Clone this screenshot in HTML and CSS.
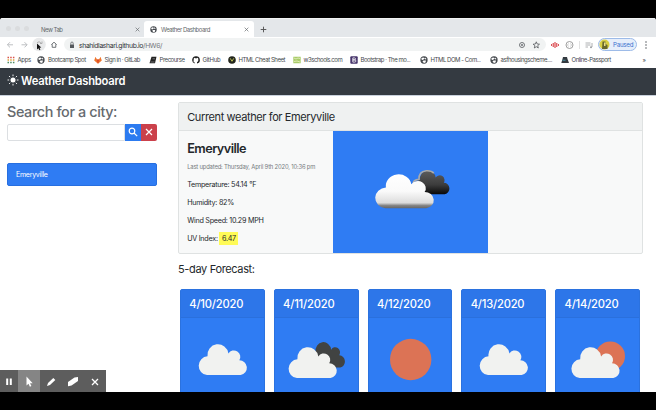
FILE: index.html
```html
<!DOCTYPE html>
<html lang="en">
<head>
<meta charset="utf-8">
<title>Weather Dashboard</title>
<link rel="stylesheet" href="styles.css">
</head>
<body>
<svg class="defs" width="0" height="0">
  <defs>
    <linearGradient id="light" x1="0" y1="0" x2="0" y2="1"><stop offset="0" stop-color="#fff"/><stop offset=".5" stop-color="#fafafa"/><stop offset=".84" stop-color="#dcdcdc"/><stop offset=".92" stop-color="#858585"/><stop offset="1" stop-color="#666"/></linearGradient>
    <linearGradient id="dark" x1="0" y1="0" x2="0" y2="1"><stop offset="0" stop-color="#5d5d5d"/><stop offset=".6" stop-color="#3c3c3c"/><stop offset="1" stop-color="#080808"/></linearGradient>
    <path id="cloud" d="M9.500 31A9.300 9.300 0 0 1 10 12.500A10.300 10.300 0 0 1 30.500 9.700A6.300 6.300 0 0 1 41.200 16.500A7.300 7.300 0 0 1 42.500 31Z"/>
    <symbol id="globe" viewBox="0 0 16 16"><circle cx="8" cy="8" r="7.300" fill="#45494e"/><path d="M3 4l4-1 2 2-2 2-2 1-2-1zM10 3l3 3-2 1-2-2zM7 9l5 0-1 4-3 1-3-3z" fill="#fff"/></symbol>
  </defs>
</svg>
<div class="window">
  <div class="tabs">
    <div class="lights"><i></i><i></i><i></i></div>
    <div class="tab idle"><span class="t-new">New Tab</span><svg class="x" viewBox="0 0 8 8"><path d="M1 1l6 6M7 1l-6 6"/></svg></div>
    <div class="tab active"><svg class="fav"><use href="#globe"/></svg><span class="t-wd">Weather Dashboard</span><svg class="x" viewBox="0 0 8 8"><path d="M1 1l6 6M7 1l-6 6"/></svg></div>
    <svg class="plus" viewBox="0 0 8 8"><path d="M4 .8v6.400M.8 4h6.400"/></svg>
  </div>
  <div class="toolbar">
    <svg class="nav" viewBox="0 0 64 15" fill="none">
      <path d="M13 7.800H7.500M10 5.200L7.400 7.800L10 10.400M21.500 7.800H27M24.500 5.200L27.100 7.800L24.500 10.400" stroke="#b5b8bb" stroke-width=".9"/>
      <circle cx="39" cy="7.500" r="6.800" fill="#e9eaeb"/><path d="M41 6a2.700 2.700 0 0 0-4-.3M42 4.500v2h-2" stroke="#999" stroke-width=".7"/>
      <path d="M37 6.500v6l1.400-1.300 1 2 1-.6-.9-1.900 1.800-.2z" fill="#111"/>
      <path d="M51.300 7.700L54 5.200L56.700 7.700M52.200 7.300V10.300H55.800V7.300" stroke="#5f6368" stroke-width=".9"/>
    </svg>
    <div class="address"><svg class="lock" viewBox="0 0 6 8"><path d="M1 3.500h4v3.500H1z" fill="#55595d"/><path d="M1.800 3.500V2.200a1.200 1.200 0 0 1 2.400 0v1.300" fill="none" stroke="#55595d" stroke-width=".7"/></svg><span class="url">shahidlashari.github.io<em>/HW6/</em></span>
      <svg class="acts" viewBox="0 0 24 12" fill="none" stroke="#55595d"><circle cx="4" cy="6" r="2.500" stroke-width=".8"/><circle cx="4" cy="6" r=".6" stroke-width=".9"/><path d="M18.300 2.800l.9 2.200 2.300.2-1.800 1.500.6 2.300-2-1.300-2 1.300.6-2.300-1.800-1.500 2.300-.2z" stroke-width=".8"/></svg>
    </div>
    <svg class="ext" viewBox="0 0 46 14" fill="none"><path d="M4.200 5v4M6 4v6M7.800 5v4M2.500 6.200v1.600M9.500 6.200v1.600" stroke="#d42b31" stroke-width="1"/><circle cx="20.500" cy="7" r="3.500" stroke="#888" stroke-width=".8"/><path d="M19.500 5.500l-1 1.500 1 1.500M21.500 5.500l1 1.500-1 1.500" stroke="#999" stroke-width=".5"/><path d="M30.500 3v8" stroke="#d5d5d5" stroke-width=".7"/><path d="M36.500 5h5M36.500 7h5M36.500 9h2.500M43 5v4" stroke="#9a9da0" stroke-width=".8"/><circle cx="42" cy="9.300" r="1" fill="#9a9da0"/></svg>
    <div class="paused"><svg viewBox="0 0 11 11"><circle cx="5.500" cy="5.500" r="5" fill="#d8cf45"/><path d="M3.500 2.500h3v2.500l2 1v4H3z" fill="#67672f"/><path d="M5 3.500h1.500V7H5z" fill="#e9df8a"/></svg><span>Paused</span></div>
    <svg class="dots" viewBox="0 0 4 10"><circle cx="2" cy="2" r=".8"/><circle cx="2" cy="5" r=".8"/><circle cx="2" cy="8" r=".8"/></svg>
  </div>
  <div class="bookmarks">
    <div class="bm b1"><svg viewBox="0 0 8 8"><path d="M.5 1.500h7" stroke="#d9534a" stroke-width="1.500" stroke-dasharray="1.500 1.200"/><path d="M.5 4h7" stroke="#e0a43b" stroke-width="1.500" stroke-dasharray="1.500 1.200"/><path d="M.5 6.600h7" stroke="#4d8c62" stroke-width="1.500" stroke-dasharray="1.500 1.200"/></svg><span>Apps</span></div>
    <div class="bm b2"><svg><use href="#globe"/></svg><span>Bootcamp Spot</span></div>
    <div class="bm b3"><svg viewBox="0 0 8 8"><path d="M1.500.7L3 3.500h2L6.500.7 7.800 4.500 4 7.700.2 4.500z" fill="#ee752e"/><path d="M3 3.500h2L4 7.700z" fill="#d93a25"/></svg><span>Sign in · GitLab</span></div>
    <div class="bm b4"><svg viewBox="0 0 8 8"><path d="M2.500.8h5L6 7.300H.5z" fill="#222"/><path d="M3.500 2.800h2.500M1.500 6h4" stroke="#aaa" stroke-width=".6"/></svg><span>Precourse</span></div>
    <div class="bm b5"><svg viewBox="0 0 8 8"><path d="M4 .3a3.700 3.700 0 0 0-1.300 7.200V6.200C1 6 1.700 5 1.700 3.500L2 1.800l1.200.5h1.600L6 1.800l.3 1.700C6.300 5 6.500 5.700 5 6v1.600A3.700 3.700 0 0 0 4 .3z" fill="#222"/></svg><span>GitHub</span></div>
    <div class="bm b6"><svg viewBox="0 0 8 8"><circle cx="4" cy="4" r="3.800" fill="#22251c"/><path d="M2.200 2.300l1.800 3 1.800-3" fill="none" stroke="#b7ba57"/></svg><span>HTML Cheat Sheet</span></div>
    <div class="bm b7"><svg viewBox="0 0 8 8"><path d="M.3.800h7.400v6.400H.3z" fill="#a8cb69"/><path d="M1 2l2 1 2-1 2 .5M1 5.500l3-.5 3 1" stroke="#e4edbb" stroke-width=".9" fill="none"/></svg><span>w3schools.com</span></div>
    <div class="bm b8"><svg viewBox="0 0 8 8"><rect x=".3" y=".3" width="7.400" height="7.400" rx="1" fill="#46346b"/><path d="M2.800 1.900h1.700a1 1 0 0 1 0 2H2.800zM2.800 3.900h2a1.100 1.100 0 0 1 0 2.200h-2z" fill="none" stroke="#fff" stroke-width=".8"/></svg><span>Bootstrap · The mo...</span></div>
    <div class="bm b9"><svg><use href="#globe"/></svg><span>HTML DOM - Com...</span></div>
    <div class="bm b10"><svg><use href="#globe"/></svg><span>asfhousingscheme....</span></div>
    <div class="bm b11"><svg viewBox="0 0 8 8"><path d="M2 1h4l.5 2L8 7H.3L1.500 3z" fill="#343a40"/><path d="M1.500 3.800h3v1h-3z" fill="#4a91a0"/></svg><span>Online-Passport</span></div>
    <div class="more">»</div>
  </div>
  <header class="navbar"><svg viewBox="0 0 12 12"><circle cx="6" cy="6" r="2.500" fill="#fff"/><path d="M6 .5v1.700M6 9.800v1.700M.5 6h1.700M9.800 6h1.700M2 2l1.200 1.200M8.800 8.800L10 10M10 2L8.800 3.200M3.200 8.800L2 10" stroke="#fff" stroke-width=".9"/></svg><h1>Weather Dashboard</h1></header>
  <main>
    <aside>
      <h2>Search for a city:</h2>
      <div class="search"><div class="field"></div><button class="go"><svg viewBox="0 0 10 10"><circle cx="4" cy="4" r="2.800"/><path d="M6 6l3.200 3.200"/></svg></button><button class="clear"><svg viewBox="0 0 10 10"><path d="M2 2l6 6M8 2L2 8"/></svg></button></div>
      <div class="city"><span>Emeryville</span></div>
    </aside>
    <section>
      <div class="card">
        <div class="card-head"><span>Current weather for Emeryville</span></div>
        <div class="card-body">
          <div class="facts">
            <h3><span>Emeryville</span></h3>
            <p class="updated">Last updated: Thursday, April 9th 2020, 10:36 pm</p>
            <p class="temp">Temperature: 54.14 °F</p>
            <p class="hum">Humidity: 82%</p>
            <p class="wind">Wind Speed: 10.29 MPH</p>
            <p class="uv">UV Index: <mark>6.47</mark></p>
          </div>
          <div class="photo"><svg viewBox="0 0 155 122"><g transform="translate(79.500 39) scale(.76 .78)"><use href="#cloud" fill="url(#dark)"/><path d="M1 17Q1 12.500 8.500 12Q8 2 18 1Q25 .5 28 4" fill="none" stroke="#aaa" stroke-width="2"/></g><use href="#cloud" transform="translate(40.500 42.500) scale(1.240 1.120)" fill="url(#light)"/></svg></div>
        </div>
      </div>
      <h4><span>5-day Forecast:</span></h4>
      <div class="days">
        <div class="day"><div class="date">4/10/2020</div><svg viewBox="0 0 85 74"><use href="#cloud" transform="translate(17.300 25.500) scale(1.020)" fill="#f1f2f0"/></svg></div>
        <div class="day"><div class="date">4/11/2020</div><svg viewBox="0 0 85 74"><use href="#cloud" transform="translate(34 23.500) scale(.76 .84)" fill="#414342"/><use href="#cloud" transform="translate(13.200 28.500) scale(1.020)" fill="#f1f2f0"/></svg></div>
        <div class="day"><div class="date">4/12/2020</div><svg viewBox="0 0 85 74"><circle cx="42.700" cy="41.500" r="20.700" fill="#dc7355"/></svg></div>
        <div class="day"><div class="date">4/13/2020</div><svg viewBox="0 0 85 74"><use href="#cloud" transform="translate(17.300 25.500) scale(1.020)" fill="#f1f2f0"/></svg></div>
        <div class="day"><div class="date">4/14/2020</div><svg viewBox="0 0 85 74"><circle cx="55.300" cy="38.200" r="14.700" fill="#dc7355"/><use href="#cloud" transform="translate(15 28.500) scale(1.020)" fill="#f1f2f0"/></svg></div>
      </div>
    </section>
  </main>
</div>
<div class="recorder"><svg viewBox="0 0 106 22"><path d="M18 0h22v22H18z" fill="#858585"/><path d="M7.200 8.500v6.500M10.800 8.500v6.500" stroke="#fff" stroke-width="2"/><path d="M26.500 6.500v9l2-1.700 1.400 3 1.500-.7-1.400-2.900h2.700z" fill="#fff"/><path d="M47 16l1-3 5.300-5 2 2-5.300 5z" fill="#fff"/><path d="M68 12l6.500-4.500 3.500-.5v4l-6.500 4.500-3.500.7z" fill="#fff"/><path d="M92 9l6 6M98 9l-6 6" stroke="#fff" stroke-width="1.300"/></svg></div>
</body>
</html>
```
FILE: styles.css
```css
* { box-sizing: border-box; }
body { margin: 0; width: 656px; height: 410px; overflow: hidden; background: #000; padding: 18px 0; font-family: Inter, sans-serif; color: #24282c; }
h1, h2, h3, h4, p { margin: 0; }
svg { display: block; flex: none; }
.defs { position: absolute; }
.window { height: 374px; overflow: hidden; background: #fff; border-radius: 3px 3px 0 0; white-space: nowrap; }

.tabs { height: 19px; background: #e4e7ea; display: flex; align-items: flex-end; font-size: 6px; letter-spacing: -.44px; color: #63676b; border-top: 1px solid #f1f2f3; }
.t-new { letter-spacing: -.5px; }
.lights { width: 35px; height: 18px; padding: 7px 0 0 6px; display: flex; gap: 4px; }
.lights i { width: 5px; height: 5px; border-radius: 50%; background: #dadcde; }
.tab { display: flex; align-items: center; height: 16px; }
.idle { width: 109px; padding-left: 6px; }
.active { width: 110px; background: #fff; border-radius: 3px 3px 0 0; padding-left: 6px; }
.fav { width: 7px; height: 7px; margin-right: 4px; }
.x { width: 5px; height: 5px; margin-left: auto; margin-right: 4px; fill: none; stroke: #666a6e; stroke-width: 1.1; }
.active .x { margin-right: 5px; }
.plus { width: 7px; height: 7px; margin: 0 0 4px 6px; stroke: #555; stroke-width: 1.1; }

.toolbar { height: 15px; display: flex; align-items: center; }
.nav { width: 64px; height: 15px; }
.address { width: 482px; height: 13px; border-radius: 7px; background: #f1f3f3; display: flex; align-items: center; padding-left: 5px; }
.lock { width: 6px; height: 8px; margin-right: 4px; }
.url { font-size: 6.8px; letter-spacing: -.36px; color: #2f3337; padding-top: 1px; }
.url em { font-style: normal; color: #74787c; }
.acts { width: 24px; height: 12px; margin-left: auto; margin-right: 4px; }
.ext { width: 46px; height: 14px; margin-left: 3px; }
.paused { width: 39px; height: 13px; margin-left: 3px; border: 1px solid #9dbbe8; border-radius: 7px; background: #e6eefb; display: flex; align-items: center; color: #3b70cf; font-size: 6.2px; letter-spacing: -.25px; }
.paused svg { width: 11px; height: 11px; margin-right: 3px; }
.dots { width: 4px; height: 10px; margin-left: 7px; fill: #5f6368; }

.bookmarks { height: 16px; padding: 0 0 1px 6.5px; display: flex; align-items: center; font-size: 6px; letter-spacing: -.45px; color: #45494d; }
.bm { display: flex; align-items: center; gap: 3px; flex: none; }
.bm svg { width: 8px; height: 8px; }
.b1 { width: 30.5px; } .b2 { width: 56.500px; } .b3 { width: 55px; } .b4 { width: 43px; }
.b5 { width: 36px; } .b6 { width: 65px; } .b7 { width: 57px; } .b8 { width: 70px; }
.b9 { width: 70px; } .b10 { width: 71px; } .b11 { width: 82px; }
.b1, .b5 { letter-spacing: -.3px; }

.navbar { height: 28px; background: #343a41; border-bottom: 1px solid #c9d1dc; display: flex; align-items: center; padding-left: 7px; color: #fff; }
.navbar svg { width: 12px; height: 12px; margin-top: -4px; }
.navbar h1 { font-size: 11.2px; letter-spacing: -.2px; font-weight: 600; margin-left: 2px; line-height: 14px; margin-top: -1px; }

main { display: flex; height: 296px; }
aside { width: 178px; padding: 6px 21px 0 7px; }
h2 { height: 21.500px; font-size: 14.4px; letter-spacing: -.39px; line-height: 19px; font-weight: 500; color: #666a6e; }
.search { display: flex; height: 17px; }
.field { width: 118px; border: 1px solid #dcdfe2; border-radius: 2px 0 0 2px; }
button { border: 0; padding: 0; display: flex; align-items: center; justify-content: center; }
button svg { width: 10px; height: 10px; fill: none; stroke: #fff; stroke-width: 1.2; }
.go { width: 15.500px; background: #2c7bf0; }
.clear { width: 16.500px; background: #cb414b; border-radius: 0 2px 2px 0; }
.city { margin-top: 22.500px; height: 22.500px; border-radius: 2px; border: 1px solid #276fe0; background: #2f7cf3; color: #fff; font-size: 7px; letter-spacing: -.25px; line-height: 21px; padding-left: 8px; }

section { width: 465px; padding-top: 6px; }
.card { height: 152px; border: 1px solid #dfe2e2; border-radius: 2px; background: #f8f9f9; }
.card-head { height: 28px; background: #eff1f1; border-bottom: 1px solid #dfe2e2; padding-left: 8.200px; font-size: 11px; letter-spacing: -.38px; line-height: 29px; }
.card-body { display: flex; height: 122px; }
.facts { width: 153.500px; padding: 9px 0 0 8.200px; }
h3 { height: 18px; font-size: 12.700px; letter-spacing: -.55px; line-height: 17px; font-weight: 600; }
.facts p { font-size: 7.200px; letter-spacing: -.27px; height: 18.300px; line-height: 18px; }
.facts p.updated { font-size: 5.900px; letter-spacing: -.2px; color: #777b7f; height: 17.500px; }
.facts mark { display: inline-block; background: #fffb57; color: #24282c; line-height: 13px; padding: 0 2.500px; }
.photo { width: 155px; background: #2f7cf3; }
.photo svg { width: 155px; height: 122px; }
h4 { height: 35px; padding-top: 7px; font-size: 11px; letter-spacing: -.35px; line-height: 17px; font-weight: 400; }
.days { display: flex; gap: 9px; padding-left: 2px; }
.day { width: 84.800px; height: 130px; flex: none; background: #2f7cf3; border: 1px solid #2b72df; border-radius: 2px; }
.date { height: 28px; background: #2d76e9; border-bottom: 1px solid #2a70dd; color: #fff; font-size: 11.200px; letter-spacing: -.2px; font-weight: 500; line-height: 28px; padding-left: 8.300px; }
.day svg { width: 85px; height: 74px; margin-left: -1px; }

.recorder { position: absolute; left: 0; top: 370px; width: 106px; height: 22px; background: #5d5d5d; }
.recorder svg { width: 106px; height: 22px; }
```
